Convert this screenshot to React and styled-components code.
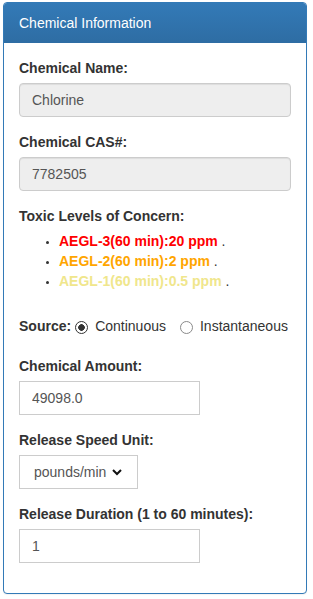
import styled, { createGlobalStyle } from 'styled-components';

const GlobalStyle = createGlobalStyle`
    * {
        box-sizing: border-box;
    }

    body {
        margin: 0;
        background: #fff;
        color: #333;
        font-family: "Liberation Sans", Arial, Helvetica, sans-serif;
        font-size: 14px;
        line-height: 20px;
    }
`;

const Page = styled.div`
    padding: 2px 6px 5px 3px;
`;

const Panel = styled.section`
    border: 1px solid #337ab7;
    border-radius: 4px;
    background: #fff;
    box-shadow: 0 1px 1px rgba(0, 0, 0, 0.05);
`;

const PanelHeading = styled.header`
    padding: 10px 15px 9px;
    background: linear-gradient(to bottom, #337ab7 0%, #2e6da4 100%);
    border-bottom: 1px solid #2e6da4;
    border-radius: 3px 3px 0 0;
    color: #fff;
    font-size: 14px;
    line-height: 20px;
`;

const PanelBody = styled.div`
    padding: 15px;
`;

const FormGroup = styled.div`
    margin-bottom: ${(p) => p.$gap || 15}px;
`;

const Label = styled.label`
    display: block;
    margin-bottom: 5px;
    font-weight: bold;
`;

const TextInput = styled.input`
    display: block;
    width: ${(p) => p.$width || '100%'};
    height: 34px;
    padding: 6px 12px;
    border: 1px solid #ccc;
    border-radius: ${(p) => (p.readOnly ? '4px' : '0')};
    background: ${(p) => (p.readOnly ? '#eee' : '#fff')};
    box-shadow: ${(p) => (p.readOnly ? 'inset 0 1px 1px rgba(0, 0, 0, 0.075)' : 'none')};
    color: #555;
    font-family: inherit;
    font-size: 14px;
    outline: none;
`;

const LevelList = styled.ul`
    margin: 0 0 25px;
    padding-left: 40px;
    line-height: 20px;

    li::marker {
        font-size: 10px;
    }
`;

const Level = styled.span`
    color: ${(p) => p.$color};
    font-weight: bold;
`;

const SourceRow = styled.div`
    display: flex;
    align-items: center;
    height: 20px;
    margin-bottom: 20px;
`;

const SourceLabel = styled.span`
    font-weight: bold;
    margin-right: 4px;
`;

const RadioOption = styled.label`
    display: flex;
    align-items: center;
    margin-left: ${(p) => p.$offset || 0}px;
    color: #333;
`;

const Radio = styled.input`
    appearance: none;
    width: 13px;
    height: 13px;
    margin: 3px 7px 0 0;
    border: 1px solid #8a8a8a;
    border-radius: 50%;
    background: #fff;

    &:checked {
        border-color: #333;
        background: radial-gradient(circle, #333 0 3px, #fff 3.6px);
    }
`;

const SelectWrap = styled.div`
    position: relative;
    display: inline-block;
`;

const Select = styled.select`
    appearance: none;
    width: 119px;
    height: 34px;
    padding: 0 0 0 14px;
    border: 1px solid #ccc;
    border-radius: 0;
    background: #fff;
    color: #555;
    font-family: inherit;
    font-size: 14px;
    outline: none;
`;

const Chevron = styled.svg`
    position: absolute;
    left: 93px;
    top: 14px;
    pointer-events: none;
`;

const levels = [
    { text: 'AEGL-3(60 min):20 ppm', color: '#ff0000' },
    { text: 'AEGL-2(60 min):2 ppm', color: '#ffa500' },
    { text: 'AEGL-1(60 min):0.5 ppm', color: '#f0e68c' },
];

export default function App() {
    return (
        <Page>
            <GlobalStyle />
            <Panel>
                <PanelHeading>Chemical Information</PanelHeading>
                <PanelBody>
                    <FormGroup>
                        <Label>Chemical Name:</Label>
                        <TextInput readOnly value="Chlorine" />
                    </FormGroup>
                    <FormGroup>
                        <Label>Chemical CAS#:</Label>
                        <TextInput readOnly value="7782505" />
                    </FormGroup>

                    <Label>Toxic Levels of Concern:</Label>
                    <LevelList>
                        {levels.map((l) => (
                            <li key={l.text}>
                                <Level $color={l.color}>{l.text}</Level> .
                            </li>
                        ))}
                    </LevelList>

                    <SourceRow>
                        <SourceLabel>Source:</SourceLabel>
                        <RadioOption>
                            <Radio type="radio" name="source" defaultChecked />
                            Continuous
                        </RadioOption>
                        <RadioOption $offset={14}>
                            <Radio type="radio" name="source" />
                            Instantaneous
                        </RadioOption>
                    </SourceRow>

                    <FormGroup>
                        <Label>Chemical Amount:</Label>
                        <TextInput $width="181px" defaultValue="49098.0" />
                    </FormGroup>
                    <FormGroup>
                        <Label>Release Speed Unit:</Label>
                        <SelectWrap>
                            <Select defaultValue="pounds/min">
                                <option>pounds/min</option>
                                <option>pounds/sec</option>
                                <option>kilograms/min</option>
                            </Select>
                            <Chevron width="10" height="7" viewBox="0 0 10 7">
                                <polyline points="1,1 5,5 9,1" fill="none" stroke="#111" strokeWidth="2" />
                            </Chevron>
                        </SelectWrap>
                    </FormGroup>
                    <FormGroup>
                        <Label>Release Duration (1 to 60 minutes):</Label>
                        <TextInput $width="181px" defaultValue="1" />
                    </FormGroup>
                </PanelBody>
            </Panel>
        </Page>
    );
}
